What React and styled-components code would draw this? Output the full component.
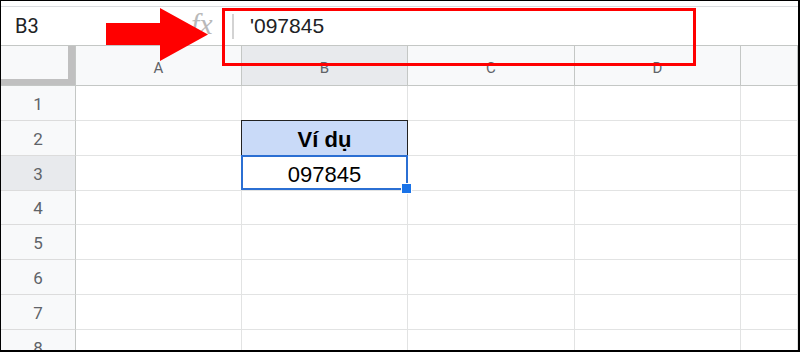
import React from "react";
import styled, { createGlobalStyle } from "styled-components";

const GlobalStyle = createGlobalStyle`
  *, *::before, *::after { box-sizing: border-box; }
  html, body { margin: 0; padding: 0; background: #fff; }
  body { font-family: "Liberation Sans", Arial, sans-serif; }
`;

const Frame = styled.div`
  position: relative;
  width: 800px;
  height: 352px;
  border-style: solid;
  border-color: #000;
  border-width: 1px 2px 2px 1px;
  overflow: hidden;
  display: flex;
  flex-direction: column;
  background: #fff;
`;

const TopStrip = styled.div`
  flex: none;
  height: 5px;
`;

const FormulaBar = styled.div`
  flex: none;
  height: 40px;
  display: flex;
  align-items: center;
  border-top: 1px solid #dadce0;
  border-bottom: 1px solid #c4c7c5;
`;

const NameBox = styled.div`
  flex: none;
  width: 167px;
  padding-left: 14px;
  font-family: Roboto, "Liberation Sans", sans-serif;
  font-size: 20px;
  color: #202124;
`;

const FxSlot = styled.div`
  flex: none;
  width: 64px;
  padding-left: 23px;
  font-family: "Liberation Serif", serif;
  font-style: italic;
  font-size: 30px;
  line-height: 1;
  color: #b9b9b9;
  margin-top: -5px;
`;

const Divider = styled.div`
  flex: none;
  width: 2px;
  height: 25px;
  background: #d3d3d3;
`;

const FormulaText = styled.div`
  flex: 1;
  padding-left: 16px;
  font-family: "Liberation Sans", Arial, sans-serif;
  font-size: 21px;
  color: #202124;
`;

const Grid = styled.div`
  flex: 1;
  display: grid;
  grid-template-columns: 75px 166px 166px 167px 166px 1fr;
  grid-template-rows: 40px 35px 35px 35px 34px 35px 35px 35px 35px;
`;

const Corner = styled.div`
  background: #f8f9fa;
  border-right: 1px solid #c4c7c5;
  border-bottom: 1px solid #c4c7c5;
  box-shadow: inset -7px -6px 0 0 #c0c0c0;
`;

const ColHeader = styled.div`
  display: flex;
  align-items: center;
  justify-content: center;
  padding-top: 4px;
  background: ${(p) => (p.$active ? "#e8eaed" : "#f8f9fa")};
  border-right: 1px solid #c4c7c5;
  border-bottom: 1px solid #c4c7c5;
  font-family: Roboto, "Liberation Sans", sans-serif;
  font-size: 15px;
  color: #5f6368;
`;

const RowHeader = styled.div`
  display: flex;
  align-items: center;
  justify-content: center;
  padding-top: 1px;
  background: ${(p) => (p.$active ? "#e8eaed" : "#f8f9fa")};
  border-right: 1px solid #c4c7c5;
  border-bottom: 1px solid #dcdcdc;
  font-family: Roboto, "Liberation Sans", sans-serif;
  font-size: 17px;
  color: #5f6368;
`;

const Cell = styled.div`
  position: ${(p) => (p.$variant ? "relative" : "static")};
  display: flex;
  align-items: flex-end;
  justify-content: center;
  padding-bottom: 2px;
  background: ${(p) => (p.$variant === "header" ? "#c9daf8" : "#fff")};
  border-right: 1px solid #e2e3e3;
  border-bottom: 1px solid #e2e3e3;
  font-family: "Liberation Sans", Arial, sans-serif;
  font-size: 22px;
  font-weight: ${(p) => (p.$variant === "header" ? 700 : 400)};
  color: #000;

  ${(p) =>
    p.$variant === "header" &&
    `
    &::after {
      content: "";
      position: absolute;
      top: -1px; left: -1px; right: -1px; bottom: -1px;
      border: 1px solid #222;
      pointer-events: none;
    }
  `}

  ${(p) =>
    p.$variant === "selected" &&
    `
    &::after {
      content: "";
      position: absolute;
      top: -1px; left: -1px; right: -1px; bottom: 0;
      border: 2px solid #2b6fd3;
      pointer-events: none;
    }
  `}
`;

const FillHandle = styled.div`
  position: absolute;
  left: 159px;
  top: 27px;
  width: 11px;
  height: 11px;
  background: #1a73e8;
  border: 1px solid #fff;
  z-index: 2;
`;

const RedBox = styled.div`
  position: absolute;
  left: 221px;
  top: 7px;
  width: 474px;
  height: 58px;
  border: 3px solid #ff0000;
  pointer-events: none;
`;

const ArrowSvg = styled.svg`
  position: absolute;
  left: 105px;
  top: 6px;
  width: 104px;
  height: 56px;
  pointer-events: none;
`;

const columns = ["A", "B", "C", "D", ""];
const activeCol = "B";
const rows = [1, 2, 3, 4, 5, 6, 7, 8];
const data = {
  "2-B": { text: "Ví dụ", variant: "header" },
  "3-B": { text: "097845", variant: "selected", handle: true },
};

export default function App() {
  return (
    <>
      <GlobalStyle />
      <Frame>
        <TopStrip />
        <FormulaBar>
          <NameBox>B3</NameBox>
          <FxSlot>fx</FxSlot>
          <Divider />
          <FormulaText>'097845</FormulaText>
        </FormulaBar>
        <Grid>
          <Corner />
          {columns.map((c, i) => (
            <ColHeader key={"h" + i} $active={c === activeCol}>
              {c}
            </ColHeader>
          ))}
          {rows.map((r) => (
            <React.Fragment key={r}>
              <RowHeader $active={r === 3}>{r}</RowHeader>
              {columns.map((c, i) => {
                const d = data[`${r}-${c}`];
                return (
                  <Cell key={i} $variant={d ? d.variant : undefined}>
                    {d ? d.text : null}
                    {d && d.handle ? <FillHandle /> : null}
                  </Cell>
                );
              })}
            </React.Fragment>
          ))}
        </Grid>
        <ArrowSvg viewBox="106 7 104 56">
          <path d="M106 23 H160 V8 L208 34.5 L160 61 V45 H106 Z" fill="#ff0000" />
        </ArrowSvg>
        <RedBox />
      </Frame>
    </>
  );
}
